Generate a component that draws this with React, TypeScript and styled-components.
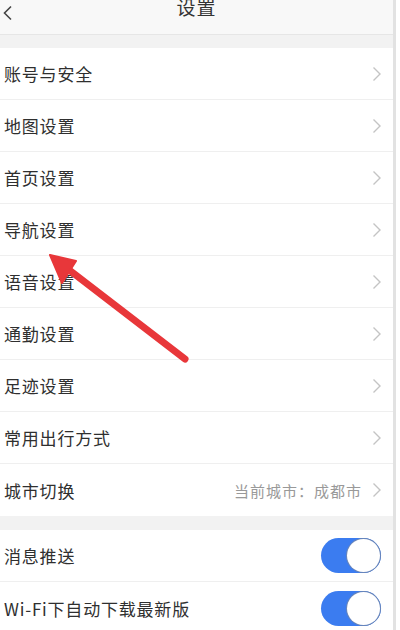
import styled, { createGlobalStyle } from 'styled-components';

const GlobalStyle = createGlobalStyle`
  html, body {
    margin: 0;
    padding: 0;
    background: #ffffff;
  }
  body {
    font-family: "Noto Sans CJK SC", "Noto Sans", sans-serif;
  }
`;

const Screen = styled.div`
  position: relative;
  width: 393px;
  height: 630px;
  overflow: hidden;
  background: #f2f2f2;
  border-right: 3px solid #e2e2e2;
`;

const Header = styled.div`
  height: 34px;
  background: #f8f8f8;
  border-bottom: 1px solid #e6e6e6;
  display: flex;
  align-items: flex-start;
  justify-content: center;
  position: relative;
`;

const Title = styled.div`
  font-size: 19px;
  line-height: 22px;
  margin-top: -4px;
  color: #333;
  letter-spacing: 1px;
`;

const BackButton = styled.div`
  position: absolute;
  left: 2px;
  top: 2px;
  width: 12px;
  height: 16px;
`;

const Section = styled.div<{ $gap: number }>`
  margin-top: ${p => p.$gap}px;
  background: #ffffff;
`;

const Row = styled.div`
  height: 52px;
  box-sizing: border-box;
  display: flex;
  align-items: center;
  padding: 0 11px 0 4px;
  border-bottom: 1px solid #efefef;
  &:last-child {
    border-bottom: none;
  }
`;

const Label = styled.div`
  flex: 1;
  font-size: 17px;
  color: #2f2f2f;
  letter-spacing: 0.8px;
`;

const Value = styled.div`
  font-size: 15px;
  color: #999;
  letter-spacing: 1px;
  margin-right: 10px;
`;

const Toggle = styled.div`
  width: 60px;
  height: 35px;
  border-radius: 18px;
  background: #3b7cf0;
  position: relative;
  margin-right: 1px;
`;

const Knob = styled.div`
  position: absolute;
  right: 1px;
  top: 1px;
  width: 33px;
  height: 33px;
  border-radius: 50%;
  background: #fff;
  box-shadow: 0 0 0 1px #6a86b8;
`;

const ArrowLayer = styled.svg`
  position: absolute;
  left: 0;
  top: 0;
  pointer-events: none;
`;

const Chevron = () => (
  <svg width="10" height="16" viewBox="0 0 10 16">
    <path d="M1.5 1.5 L8 8 L1.5 14.5" fill="none" stroke="#c4c4c4" strokeWidth="1.4" />
  </svg>
);

const items = ['账号与安全', '地图设置', '首页设置', '导航设置', '语音设置', '通勤设置', '足迹设置', '常用出行方式'];

export default function App() {
  return (
    <>
      <GlobalStyle />
      <Screen>
        <Header>
          <BackButton>
            <svg width="12" height="16" viewBox="0 0 12 16">
              <path d="M9 1.5 L2.5 8 L9 14.5" fill="none" stroke="#444" strokeWidth="1.6" />
            </svg>
          </BackButton>
          <Title>设置</Title>
        </Header>
        <Section $gap={13}>
          {items.map(t => (
            <Row key={t}>
              <Label>{t}</Label>
              <Chevron />
            </Row>
          ))}
          <Row>
            <Label>城市切换</Label>
            <Value>当前城市：成都市</Value>
            <Chevron />
          </Row>
        </Section>
        <Section $gap={14}>
          <Row>
            <Label>消息推送</Label>
            <Toggle><Knob /></Toggle>
          </Row>
          <Row>
            <Label>Wi-Fi下自动下载最新版</Label>
            <Toggle><Knob /></Toggle>
          </Row>
        </Section>
        <ArrowLayer width="393" height="630" viewBox="0 0 393 630">
          <line x1="185" y1="359" x2="64" y2="266" stroke="#e8373a" strokeWidth="7" strokeLinecap="round" />
          <polygon points="50,255 76,261 62,283" fill="#e8373a" stroke="#e8373a" strokeWidth="2" strokeLinejoin="round" />
        </ArrowLayer>
      </Screen>
    </>
  );
}
